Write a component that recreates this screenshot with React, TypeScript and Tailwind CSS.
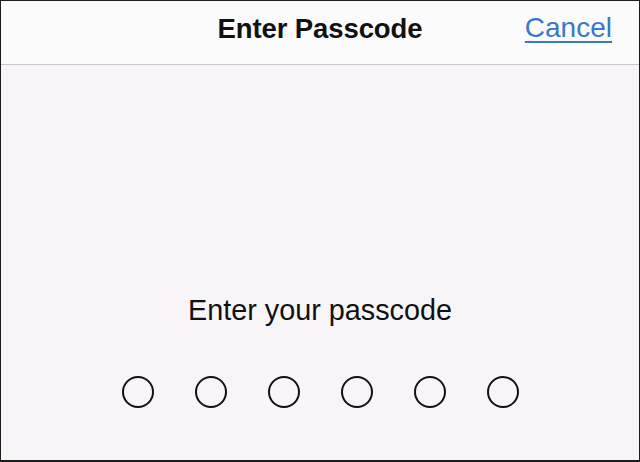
export default function App() {
  const dots = [0, 1, 2, 3, 4, 5];

  return (
    <div
      className="w-[640px] h-[462px] flex flex-col border border-b-2 border-[#1c1c1c] bg-[#f7f5f8] text-[#111]"
      style={{ fontFamily: '"Liberation Sans", Arial, sans-serif' }}
    >
      <header className="h-[64px] shrink-0 grid grid-cols-[1fr_auto_1fr] items-start pt-[11px] bg-[#fcfbfc] border-b border-[#c9c8cc]">
        <div />
        <h1 className="mt-[1px] text-[27.5px] leading-[32px] font-bold tracking-[-0.1px]">Enter Passcode</h1>
        <div className="flex justify-end pr-[27px]">
          <button className="text-[28px] leading-[32px] text-[#3a78c8] underline decoration-2 underline-offset-[4px]">
            Cancel
          </button>
        </div>
      </header>

      <main className="flex-1 flex flex-col items-center pt-[228px]">
        <p className="text-[28.8px] leading-[34px]">Enter your passcode</p>
        <div className="mt-[49px] flex gap-[41px]">
          {dots.map((d) => (
            <span key={d} className="w-[32px] h-[32px] rounded-full border-2 border-[#111]" />
          ))}
        </div>
      </main>
    </div>
  );
}
